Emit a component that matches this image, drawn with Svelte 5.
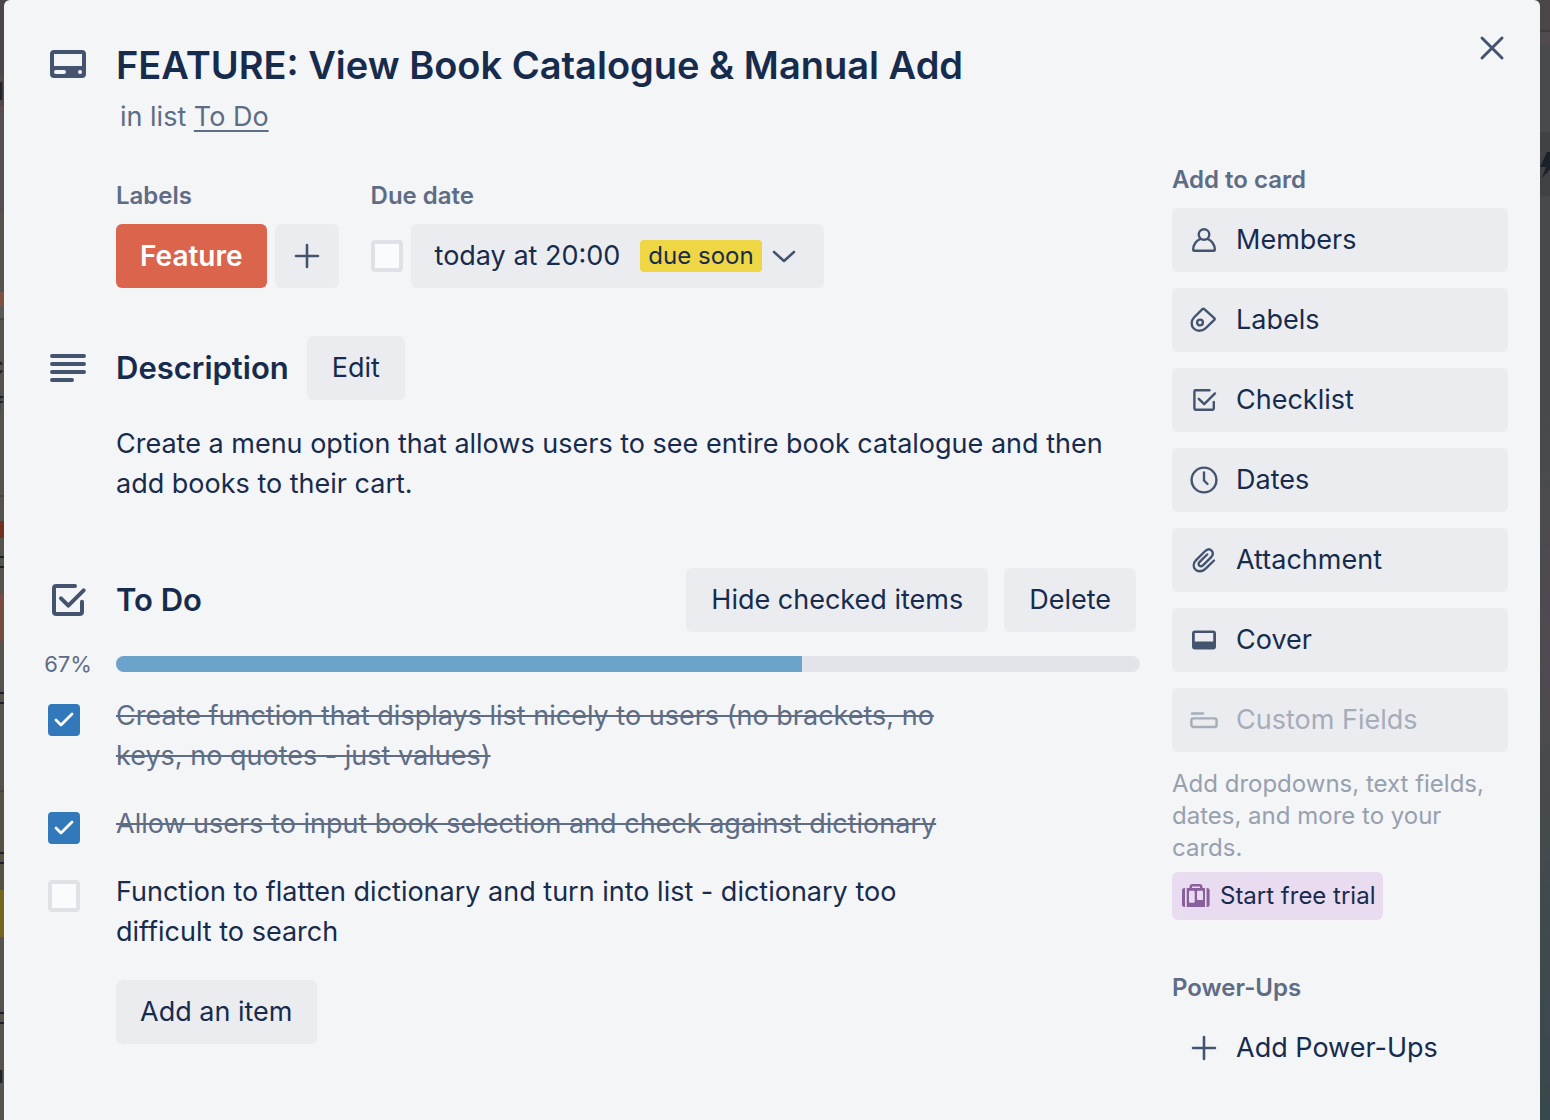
<script>
  let items = $state([
    { text: 'Create function that displays list nicely to users (no brackets, no keys, no quotes - just values)', done: true },
    { text: 'Allow users to input book selection and check against dictionary', done: true },
    { text: 'Function to flatten dictionary and turn into list - dictionary too difficult to search', done: false }
  ]);
  let dueDone = $state(false);
  let percent = $derived(Math.round((items.filter((i) => i.done).length / items.length) * 100));

  const actions = ['Members', 'Labels', 'Checklist', 'Dates', 'Attachment', 'Cover', 'Custom Fields'];
  const fragments = [
    { char: 'd', top: 76 },
    { char: 'c', top: 350 },
    { char: 'f', top: 390 },
    { char: 'u', top: 1059 }
  ];
</script>

{#snippet tick()}
  <svg class="tick" viewBox="0 0 32 32" aria-hidden="true"><path d="M8 16l5 5 11-11" /></svg>
{/snippet}

{#snippet plus()}
  <svg class="small" viewBox="0 0 32 32" aria-hidden="true"><path d="M16 5v22M5 16h22" stroke-width="2.600" /></svg>
{/snippet}

<div class="board">
  <div class="behind" aria-hidden="true">
    {#each fragments as f}
      <span style:top="{f.top}px">{f.char}</span>
    {/each}
    <svg class="bolt" viewBox="0 0 18 26"><path d="M7 0h8l-4 9h7L2 26l4-11H0z" /></svg>
  </div>

  <main class="dialog">
    <header>
      <svg class="icon" viewBox="0 0 40 40" aria-hidden="true">
        <path class="solid" fill-rule="evenodd" d="M6 5h28a4 4 0 0 1 4 4v20a4 4 0 0 1-4 4H6a4 4 0 0 1-4-4V9a4 4 0 0 1 4-4zM6 9v12h28V9zM8 25a2 2 0 0 0 0 4h8a2 2 0 0 0 0-4zM32 25a2 2 0 1 0 0 4a2 2 0 0 0 0-4z" />
      </svg>
      <div class="heading">
        <h1>FEATURE: View Book Catalogue &amp; Manual Add</h1>
        <p>in list <a href="#todo">To Do</a></p>
      </div>
      <button class="close" aria-label="Close">
        <svg viewBox="0 0 32 32" aria-hidden="true"><path d="M6 6l20 20M26 6L6 26" stroke-width="3" /></svg>
      </button>
    </header>

    <div class="columns">
      <div class="content">
        <div class="meta">
          <section>
            <h3>Labels</h3>
            <div class="line">
              <button class="btn feature">Feature</button>
              <button class="btn add" aria-label="Add label">{@render plus()}</button>
            </div>
          </section>
          <section>
            <h3>Due date</h3>
            <div class="line">
              <span class="check"><input type="checkbox" aria-label="Mark due date complete" bind:checked={dueDone} />{@render tick()}</span>
              <button class="btn due">
                today at 20:00 <span class="badge">due soon</span>
                <svg class="small" viewBox="0 0 32 32" aria-hidden="true"><path d="M6 12l10 9 10-9" stroke-width="2.600" /></svg>
              </button>
            </div>
          </section>
        </div>

        <section class="description">
          <div class="row">
            <svg class="icon" viewBox="0 0 40 40" aria-hidden="true"><path d="M4 8h32M4 16h32M4 24h32M4 32h20" stroke-width="4" /></svg>
            <h2>Description</h2>
            <button class="btn tool">Edit</button>
          </div>
          <p>Create a menu option that allows users to see entire book catalogue and then add books to their cart.</p>
        </section>

        <section class="checklist" id="todo">
          <div class="row">
            <svg class="icon" viewBox="0 0 24 24" aria-hidden="true" stroke-width="2.400">
              <path d="M16.200 3.600H5C4.200 3.600 3.600 4.200 3.600 5v14c0 .8.600 1.400 1.400 1.400h14c.8 0 1.400-.6 1.400-1.400v-6" />
              <path d="M7.800 11l4.400 4.400 9.200-9.200" />
            </svg>
            <h2>To Do</h2>
            <div class="tools">
              <button class="btn tool">Hide checked items</button>
              <button class="btn tool">Delete</button>
            </div>
          </div>
          <div class="progress">
            <span class="percent">{percent}%</span>
            <div class="track" role="progressbar" aria-label="Checklist progress" aria-valuenow={percent} aria-valuemin="0" aria-valuemax="100">
              <div class="fill" style:width="{percent}%"></div>
            </div>
          </div>
          <ul>
            {#each items as item, i}
              <li>
                <span class="check"><input id="item-{i}" type="checkbox" bind:checked={item.done} />{@render tick()}</span>
                <label for="item-{i}" class:done={item.done}>{item.text}</label>
              </li>
            {/each}
          </ul>
          <button class="btn new-item">Add an item</button>
        </section>
      </div>

      <aside>
        <h3>Add to card</h3>
        <div class="actions">
          {#each actions as name}
            <button class="btn side" disabled={name === 'Custom Fields'}>
              <svg class="small" viewBox="0 0 32 32" aria-hidden="true" stroke-width="2.400">
                {#if name === 'Members'}
                  <circle cx="16" cy="10.500" r="5.300" />
                  <path d="M12 15.200C8.500 16.500 5.200 20.500 5.200 25.500c0 .8.500 1.300 1.300 1.300h19c.8 0 1.300-.5 1.300-1.300 0-5-3.300-9-6.800-10.300" />
                {:else if name === 'Labels'}
                  <path d="M14.400 5.200L6 13.500C2.800 17 3 21.800 5.800 24.500C9 27.500 14 27.500 17.500 24.300L26.300 15.900c.5-.5.5-1.200 0-1.700L16.300 5.200c-.6-.5-1.300-.5-1.900 0z" />
                  <circle cx="12" cy="18.500" r="2.900" />
                {:else if name === 'Checklist'}
                  <path d="M21.500 6.300H7.600c-.7 0-1.200.5-1.200 1.200v17c0 .7.500 1.200 1.200 1.200h17c.7 0 1.200-.5 1.200-1.200V18" />
                  <path d="M10.800 14.800l5.400 5.400L27 9.400" />
                {:else if name === 'Dates'}
                  <circle cx="16" cy="16" r="12.400" />
                  <path d="M16 8.500v8l3.500 3.500" />
                {:else if name === 'Attachment'}
                  <path d="M26 16.500l-8.600 8.300c-3.300 3.200-7.600 3.200-10 .7s-2.300-6.400.7-9.400l8.600-8.600c2.400-2.400 5-2.700 6.900-.9s1.600 4.500-.6 6.700l-7.800 7.800c-1.400 1.400-2.900 1.400-3.900.5s-.9-2.500.4-3.800l7.500-7.300" />
                {:else if name === 'Cover'}
                  <path class="solid" fill-rule="evenodd" d="M7 6.500h18a3 3 0 0 1 3 3v13a3 3 0 0 1-3 3H7a3 3 0 0 1-3-3v-13a3 3 0 0 1 3-3zM6.800 9v8.500h18.400V9z" />
                {:else}
                  <path d="M4 9.500h11" />
                  <rect x="3.400" y="14.400" width="25.200" height="8.600" rx="2" />
                {/if}
              </svg>
              {name}
            </button>
          {/each}
        </div>
        <p class="hint">Add dropdowns, text fields, dates, and more to your cards.</p>
        <button class="trial">
          <svg viewBox="0 0 32 28" aria-hidden="true">
            <path class="solid" fill-rule="evenodd" d="M6.700 6h2.800V5a3 3 0 0 1 3-3h7a3 3 0 0 1 3 3v1H25v19H6.700zM12 6h8V4.600h-8zM10 8.700a1 1 0 0 0-1 1v10a1 1 0 0 0 1 1h3.700a1 1 0 0 0 1-1v-10a1 1 0 0 0-1-1zM18 8.700a1 1 0 0 0-1 1V17a1 1 0 0 0 1 1h4a1 1 0 0 0 1-1V9.700a1 1 0 0 0-1-1z" />
            <path class="solid" d="M5 6v19H4.500A2.500 2.500 0 0 1 2 22.500v-14A2.500 2.500 0 0 1 4.500 6zM26.600 6v19h.5a2.500 2.500 0 0 0 2.500-2.500v-14A2.500 2.500 0 0 0 27.100 6z" />
          </svg>
          Start free trial
        </button>
        <h3 class="power">Power-Ups</h3>
        <button class="btn side plain">{@render plus()} Add Power-Ups</button>
      </aside>
    </div>
  </main>
</div>

<style>
  :global(body) {
    margin: 0;
    background: #464a4d;
  }
  .board {
    position: relative;
    overflow: hidden;
    box-sizing: border-box;
    min-height: 100vh;
    display: flex;
    padding: 0 10px 0 4px;
    font-family: Inter, 'Liberation Sans', sans-serif;
    font-size: 27px;
    line-height: 40px;
    color: #172b4d;
    background: linear-gradient(#4b4648 30px, #413c3f 30px 32px, #514a4e 32px 45px, #484b4e 45px 132px, #414245 132px 196px, #464a4d 196px 400px, #514a52 650px, #464a4d 800px, #39484c) right / 10px 100% no-repeat;
  }
  .behind {
    position: absolute;
    inset: 0;
    background: linear-gradient(#4b464a 74px, #51484a 74px 106px, #584c50 106px 212px, #56534f 212px 292px, #81503f 292px 306px, #5b5955 306px 318px, #444546 318px 320px, #56534f 320px 495px, #444546 495px 497px, #56534f 497px 521px, #722f20 521px 538px, #56534f 538px 556px, #1c2129 556px 558px, #56534f 558px 566px, #1c2129 566px 568px, #56534f 568px 594px, #764c42 594px 641px, #56534f 641px 692px, #1c2129 692px 694px, #56534f 694px 702px, #1c2129 702px 704px, #56534f 704px 790px, #444546 790px 792px, #545245 792px 852px, #1c2129 852px 854px, #545245 854px 862px, #1c2129 862px 864px, #545245 864px 890px, #75671e 890px 937px, #56534f 937px 1012px, #1c2129 1012px 1014px, #56534f 1014px 1022px, #1c2129 1022px 1024px, #56534f 1024px) left / 4px 100% no-repeat;
  }
  .behind span {
    position: absolute;
    left: -12px;
    width: 16px;
    line-height: 32px;
    text-align: right;
    font-size: 24px;
    color: #1c2129;
  }
  .bolt {
    position: absolute;
    right: -8px;
    top: 152px;
    width: 18px;
    height: 26px;
  }
  .bolt path {
    fill: #1b202a;
    stroke: none;
  }
  .dialog {
    position: relative;
    flex: 1;
    min-width: 0;
    box-sizing: border-box;
    padding: 40px 32px 40px 44px;
    background: #f4f5f7;
    border-radius: 6px 6px 0 0;
  }
  svg {
    fill: none;
    stroke: #44546f;
    stroke-linecap: round;
    stroke-linejoin: round;
    flex: none;
  }
  .solid {
    fill: #44546f;
    stroke: none;
  }
  .icon {
    width: 40px;
    height: 40px;
    margin-right: 28px;
  }
  .small {
    width: 32px;
    height: 32px;
  }
  h1, h2, h3, p, ul {
    margin: 0;
    padding: 0;
  }
  h1 {
    font-size: 38px;
    line-height: 50px;
    font-weight: 600;
  }
  h2 {
    font-size: 31px;
    line-height: 40px;
    font-weight: 600;
  }
  h3 {
    font-size: 24px;
    line-height: 32px;
    font-weight: 600;
    color: #5e6c84;
  }
  header {
    display: flex;
    align-items: flex-start;
  }
  header .icon {
    margin-top: 5px;
  }
  .heading {
    flex: 1;
  }
  .heading p {
    padding: 7px 4px 0;
    color: #5e6c84;
  }
  .heading a {
    color: inherit;
    text-underline-offset: 4px;
    text-decoration-thickness: 2px;
  }
  button {
    font: inherit;
    color: inherit;
    border: 0;
    cursor: pointer;
  }
  .close {
    width: 32px;
    height: 32px;
    margin-top: -8px;
    padding: 0;
    background: none;
  }
  .close svg {
    width: 32px;
    height: 32px;
    display: block;
  }
  .btn {
    display: flex;
    align-items: center;
    box-sizing: border-box;
    min-height: 64px;
    padding: 0 24px;
    border-radius: 6px;
    background: #ebecf0;
    white-space: nowrap;
  }
  .columns {
    display: grid;
    grid-template-columns: minmax(0, 1fr) 336px;
    gap: 32px;
    padding-top: 27px;
  }
  .meta {
    display: flex;
    gap: 32px;
    padding: 16px 0 0 68px;
  }
  .line {
    display: flex;
    align-items: center;
    gap: 8px;
    margin-top: 12px;
  }
  .feature {
    background: #db644d;
    color: #fff;
    font-size: 28px;
    font-weight: 600;
  }
  .add {
    padding: 0 16px;
  }
  .due .badge {
    margin: 0 6px 0 20px;
    padding: 0 8px;
    border-radius: 4px;
    background: #eed645;
    font-size: 24px;
    line-height: 32px;
  }
  .check {
    display: grid;
    width: 32px;
    height: 32px;
    flex: none;
  }
  .check input,
  .tick {
    grid-area: 1 / 1;
    width: 32px;
    height: 32px;
  }
  .check input {
    appearance: none;
    box-sizing: border-box;
    margin: 0;
    border: 4px solid #dfe1e6;
    border-radius: 4px;
    background: #fafbfc;
  }
  .check input:checked {
    border-color: #3179ba;
    background: #3179ba;
  }
  .tick {
    stroke: #fff;
    stroke-width: 2.800;
    pointer-events: none;
    visibility: hidden;
  }
  .check input:checked + .tick {
    visibility: visible;
  }
  .row {
    display: flex;
    align-items: center;
  }
  .description {
    padding-top: 48px;
  }
  .description .btn {
    margin-left: 18px;
  }
  .tool {
    padding: 0 25px;
  }
  .description p {
    padding: 24px 0 0 68px;
  }
  .checklist {
    padding-top: 64px;
  }
  .tools {
    display: flex;
    gap: 16px;
    margin: 0 4px 0 auto;
  }
  .progress {
    display: flex;
    align-items: center;
    margin-top: 24px;
    height: 16px;
  }
  .percent {
    display: flex;
    justify-content: center;
    width: 40px;
    margin-right: 28px;
    font-size: 22px;
    color: #5e6c84;
  }
  .track {
    flex: 1;
    height: 16px;
    border-radius: 8px;
    overflow: hidden;
    background: #e2e4e9;
  }
  .fill {
    height: 16px;
    background: #6ca3cb;
  }
  ul {
    list-style: none;
    display: flex;
    flex-direction: column;
    gap: 28px;
    padding: 24px 170px 0 0;
  }
  li {
    display: flex;
    gap: 36px;
  }
  li .check {
    margin-top: 8px;
  }
  .done {
    color: #5e6c84;
    text-decoration: line-through;
    text-decoration-thickness: 2px;
  }
  .new-item {
    margin: 28px 0 0 68px;
  }
  .actions {
    display: flex;
    flex-direction: column;
    gap: 16px;
    margin-top: 12px;
  }
  .side {
    width: 100%;
    padding: 0 16px;
    gap: 16px;
  }
  .side:disabled {
    color: #a5adba;
    cursor: default;
  }
  .side:disabled svg {
    stroke: #a5adba;
  }
  .hint {
    margin-top: 16px;
    font-size: 24px;
    line-height: 32px;
    color: #97a0af;
  }
  .trial {
    display: flex;
    align-items: center;
    gap: 8px;
    min-height: 48px;
    margin-top: 8px;
    padding: 0 8px;
    border-radius: 6px;
    background: #eadcf0;
    font-size: 24px;
    white-space: nowrap;
  }
  .trial svg {
    width: 32px;
    height: 28px;
  }
  .trial .solid {
    fill: #89609e;
  }
  .power {
    margin: 52px 0 12px;
  }
  .plain {
    background: none;
  }
</style>
